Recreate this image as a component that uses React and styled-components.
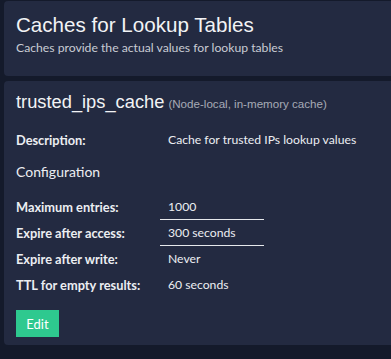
import React from "react";
import styled, { createGlobalStyle } from "styled-components";

const GlobalStyle = createGlobalStyle`
   html, body {
      margin: 0;
      padding: 0;
      background: #141a2b;
      overflow: hidden;
   }
   body {
      font-family: Lato, "Liberation Sans", sans-serif;
      color: #eceef2;
   }
`;

const Page = styled.div`
   width: 440px;
   padding: 1px 0 0 4px;
   display: flex;
   flex-direction: column;
   gap: 5px;
`;

const Panel = styled.section`
   background: #232a41;
   border-radius: 4px;
   padding: ${(p) => p.$pad};
   height: ${(p) => p.$height}px;
   box-sizing: border-box;
`;

const PageTitle = styled.h1`
   margin: 0;
   font-family: "Liberation Sans", Arial, sans-serif;
   font-weight: 400;
   font-size: 20.6px;
   line-height: 28px;
   color: #f2f3f5;
`;

const Lead = styled.p`
   margin: 0;
   font-size: 12.2px;
   line-height: 18px;
   color: #c9ccd4;
`;

const CacheTitle = styled.h2`
   margin: 0;
   font-family: "Liberation Sans", Arial, sans-serif;
   font-weight: 400;
   font-size: 18.3px;
   line-height: 24px;
   color: #f2f3f5;
   small {
      font-size: 11.6px;
      color: #a7abb6;
      margin-left: 4px;
   }
`;

const InfoRow = styled.div`
   display: flex;
   align-items: center;
   height: ${(p) => p.$h || 26}px;
   margin-top: ${(p) => p.$mt || 0}px;
`;

const Label = styled.div`
   flex: none;
   width: 144px;
   font-weight: 700;
   font-size: 12.8px;
`;

const Value = styled.div`
   box-sizing: border-box;
   width: ${(p) => (p.$wide ? "auto" : "104px")};
   height: 100%;
   display: flex;
   align-items: center;
   padding-left: 8px;
   font-size: 12.2px;
   border-bottom: 1px solid ${(p) => (p.$editable ? "#e6e8ec" : "transparent")};
   white-space: nowrap;
`;

const SectionTitle = styled.h3`
   margin: 11px 0 0;
   font-weight: 400;
   font-size: 14px;
   line-height: 22px;
`;

const Config = styled.div`
   margin-top: 11px;
`;

const EditButton = styled.button`
   display: block;
   margin-top: 12px;
   height: 27px;
   width: 43px;
   border: none;
   border-radius: 0;
   background: #2ec98f;
   color: #ffffff;
   font-family: Lato, "Liberation Sans", sans-serif;
   font-size: 13px;
   padding: 0;
   cursor: pointer;
`;

const config = [
   { label: "Maximum entries:", value: "1000", editable: true },
   { label: "Expire after access:", value: "300 seconds", editable: true },
   { label: "Expire after write:", value: "Never" },
   { label: "TTL for empty results:", value: "60 seconds" },
];

const App = () => {
   return (
      <>
         <GlobalStyle />
         <Page>
            <Panel $pad="10px 12px 0" $height={75}>
               <PageTitle>Caches for Lookup Tables</PageTitle>
               <Lead>Caches provide the actual values for lookup tables</Lead>
            </Panel>
            <Panel $pad="9px 12px 10px" $height={264}>
               <CacheTitle>
                  trusted_ips_cache<small>(Node-local, in-memory cache)</small>
               </CacheTitle>
               <InfoRow $h={20} $mt={14}>
                  <Label>Description:</Label>
                  <Value $wide>Cache for trusted IPs lookup values</Value>
               </InfoRow>
               <SectionTitle>Configuration</SectionTitle>
               <Config>
                  {config.map((row) => (
                     <InfoRow key={row.label}>
                        <Label>{row.label}</Label>
                        <Value $editable={row.editable}>{row.value}</Value>
                     </InfoRow>
                  ))}
               </Config>
               <EditButton>Edit</EditButton>
            </Panel>
         </Page>
      </>
   );
};

export default App;
